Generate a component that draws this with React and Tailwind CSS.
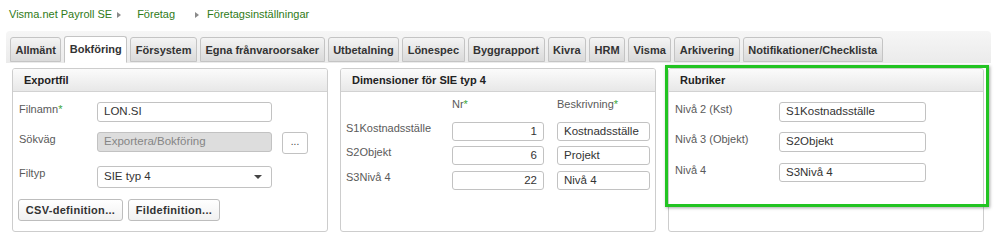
import React from "react";

const Tri = () => (
  <span className="inline-block w-0 h-0 border-l-[4px] border-l-[#8a8a8a] border-y-[3px] border-y-transparent" />
);

const tabs = [
  "Allmänt",
  "Bokföring",
  "Försystem",
  "Egna frånvaroorsaker",
  "Utbetalning",
  "Lönespec",
  "Byggrapport",
  "Kivra",
  "HRM",
  "Visma",
  "Arkivering",
  "Notifikationer/Checklista",
];

const Panel = ({ title, children }) => (
  <div className="w-[316px] h-[164px] border border-[#cdcdcd] rounded-[3px] overflow-hidden bg-white">
    <div className="h-[23px] bg-gradient-to-b from-[#fbfbfb] to-[#e8e8e8] border-b border-[#d2d2d2] pl-[11px] text-[11px] font-bold leading-[23px] text-[#222]">
      {title}
    </div>
    {children}
  </div>
);

const Input = ({ value, className = "", right = false, disabled = false }) => (
  <div
    className={
      "border border-[#c2c2c2] rounded-[3px] px-[6px] flex items-center text-[11.5px] " +
      (right ? "justify-end " : "") +
      (disabled ? "bg-[#dddddd] text-[#858585] " : "bg-white text-[#333] ") +
      className
    }
  >
    {value}
  </div>
);

const Star = () => <span className="text-[#3aa63a]">*</span>;

export default function App() {
  return (
    <div
      className="w-[997px] h-[246px] bg-white overflow-hidden"
      style={{ fontFamily: '"Liberation Sans", Arial, sans-serif' }}
    >
      {/* Breadcrumb */}
      <div className="h-[31px] pt-[8px] pl-[9px] flex items-start text-[11px] leading-[13px] text-[#2f7a17]">
        <span>Visma.net Payroll SE</span>
        <span className="ml-[5px] h-[13px] flex items-center"><Tri /></span>
        <span className="ml-[16px]">Företag</span>
        <span className="ml-[20px] h-[13px] flex items-center"><Tri /></span>
        <span className="ml-[8px]">Företagsinställningar</span>
      </div>

      {/* Tabs */}
      <div className="mx-[6px] h-[32px] pl-[4px] flex items-end gap-[3px] rounded-t-[4px] bg-gradient-to-b from-[#f6f6f6] to-[#ebebeb]">
        {tabs.map((t) => (
          <div
            key={t}
            className={
              "px-[4.5px] border border-[#c4c4c4] rounded-t-[3px] text-[11px] font-bold leading-[24px] text-[#333] " +
              (t === "Bokföring"
                ? "bg-white border-b-white h-[27px]"
                : "bg-gradient-to-b from-[#f4f4f4] to-[#dadada] mb-[1px] h-[25px]")
            }
          >
            {t}
          </div>
        ))}
      </div>

      {/* Panels */}
      <div className="mt-[5px] px-[12px] flex gap-[12px]">
        <Panel title="Exportfil">
          <div className="pl-[6px] pt-[10px] flex flex-col">
            <div className="flex h-[20px]">
              <div className="w-[78px] text-[11px] leading-[15px] text-[#5a5a5a]">
                Filnamn<Star />
              </div>
              <Input value="LON.SI" className="w-[175px] h-[20px]" />
            </div>
            <div className="flex h-[22px] mt-[10px]">
              <div className="w-[78px] text-[11px] leading-[15px] text-[#5a5a5a]">Sökväg</div>
              <Input value="Exportera/Bokföring" disabled className="w-[175px] h-[20px]" />
              <div className="ml-[10px] w-[26px] h-[22px] border border-[#c2c2c2] rounded-[3px] bg-white flex items-center justify-center text-[10px] text-[#444] leading-none pb-[2px]">
                ...
              </div>
            </div>
            <div className="flex h-[22px] mt-[12px]">
              <div className="w-[78px] text-[11px] leading-[15px] text-[#5a5a5a]">Filtyp</div>
              <div className="w-[175px] h-[22px] border border-[#c2c2c2] rounded-[3px] bg-white px-[6px] flex items-center justify-between text-[11.5px] text-[#333]">
                <span>SIE typ 4</span>
                <span className="mr-[3px] inline-block w-0 h-0 border-x-[4px] border-x-transparent border-t-[4px] border-t-[#444]" />
              </div>
            </div>
            <div className="flex mt-[11px] -ml-[1px] gap-[5px]">
              <div className="h-[22px] w-[105px] border border-[#bdbdbd] rounded-[3px] bg-gradient-to-b from-white to-[#f1f1f1] flex items-center justify-center text-[11px] font-bold tracking-[0.3px] text-[#333]">
                CSV-definition...
              </div>
              <div className="h-[22px] w-[92px] border border-[#bdbdbd] rounded-[3px] bg-gradient-to-b from-white to-[#f1f1f1] flex items-center justify-center text-[11px] font-bold tracking-[0.3px] text-[#333]">
                Fildefinition...
              </div>
            </div>
          </div>
        </Panel>

        <Panel title="Dimensioner för SIE typ 4">
          <div className="pl-[5px] pt-[5px] flex flex-col">
            <div className="flex h-[14px] text-[11px] leading-[14px] text-[#5a5a5a]">
              <div className="w-[106px]" />
              <div className="w-[105px]">
                Nr<Star />
              </div>
              <div>
                Beskrivning<Star />
              </div>
            </div>
            {[
              ["S1Kostnadsställe", "1", "Kostnadsställe", "mt-[11px]"],
              ["S2Objekt", "6", "Projekt", "mt-[5px]"],
              ["S3Nivå 4", "22", "Nivå 4", "mt-[6px]"],
            ].map(([l, n, b, m]) => (
              <div key={l} className={"flex h-[19px] " + m}>
                <div className="w-[106px] text-[11px] leading-[13px] text-[#5a5a5a]">{l}</div>
                <Input value={n} right className="w-[92px] h-[19px]" />
                <Input value={b} className="ml-[13px] w-[93px] h-[19px]" />
              </div>
            ))}
          </div>
        </Panel>

        <div className="relative">
          <Panel title="Rubriker">
            <div className="pl-[6px] pt-[10px] flex flex-col">
              {[
                ["Nivå 2 (Kst)", "S1Kostnadsställe", "", "h-[20px]"],
                ["Nivå 3 (Objekt)", "S2Objekt", "mt-[10px]", "h-[20px]"],
                ["Nivå 4", "S3Nivå 4", "mt-[11px]", "h-[19px]"],
              ].map(([l, v, m, h]) => (
                <div key={l} className={"flex " + m}>
                  <div className="w-[104px] text-[11px] leading-[15px] text-[#5a5a5a]">{l}</div>
                  <Input value={v} className={"w-[147px] " + h} />
                </div>
              ))}
            </div>
          </Panel>
          <div className="absolute -left-[3px] -top-[3px] w-[324px] h-[142px] border-[3px] border-[#22c422] shadow-[1px_1px_3px_rgba(0,0,0,0.35)] pointer-events-none" />
        </div>
      </div>
    </div>
  );
}
